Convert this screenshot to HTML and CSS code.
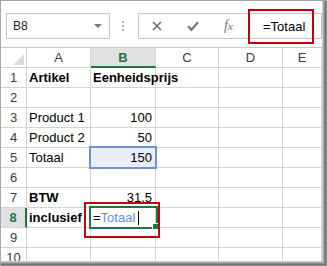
FILE: index.html
```html
<!DOCTYPE html>
<html>
<head>
<meta charset="utf-8">
<link rel="stylesheet" href="styles.css">
</head>
<body>
<div class="window">
  <div class="inner">
    <div class="toolbar">
      <div class="namebox"><span>B8</span><span class="caret"></span></div>
      <div class="dots"><i></i><i></i><i></i></div>
      <div class="fbar">
        <svg class="icon-x" width="10" height="10" viewBox="0 0 10 10"><path d="M1 1 L9 9 M9 1 L1 9" stroke="#6b6b6b" stroke-width="1.6" fill="none"/></svg>
        <svg class="icon-ok" width="12" height="12" viewBox="0 0 12 12"><path d="M1 6.2 L4.4 9.8 L11 2.2" stroke="#7a7a7a" stroke-width="2.3" fill="none"/></svg>
        <span class="fx">f<small>x</small></span>
        <span class="ftext">=Totaal</span>
      </div>
    </div>
    <div class="grid">
      <div class="hd corner"><span class="tri"></span></div>
      <div class="hd">A</div>
      <div class="hd sel-col">B</div>
      <div class="hd">C</div>
      <div class="hd">D</div>
      <div class="hd">E</div>

      <div class="rh">1</div><div class="c b">Artikel</div><div class="c b">Eenheidsprijs</div><div class="c"></div><div class="c"></div><div class="c"></div>
      <div class="rh">2</div><div class="c"></div><div class="c"></div><div class="c"></div><div class="c"></div><div class="c"></div>
      <div class="rh">3</div><div class="c">Product 1</div><div class="c num">100</div><div class="c"></div><div class="c"></div><div class="c"></div>
      <div class="rh">4</div><div class="c">Product 2</div><div class="c num">50</div><div class="c"></div><div class="c"></div><div class="c"></div>
      <div class="rh">5</div><div class="c">Totaal</div><div class="c num refcell">150</div><div class="c"></div><div class="c"></div><div class="c"></div>
      <div class="rh">6</div><div class="c"></div><div class="c"></div><div class="c"></div><div class="c"></div><div class="c"></div>
      <div class="rh">7</div><div class="c b">BTW</div><div class="c num">31,5</div><div class="c"></div><div class="c"></div><div class="c"></div>
      <div class="rh sel-row">8</div><div class="c b">inclusief</div><div class="c edit"><span class="eq">=</span><span class="ref">Totaal</span><span class="cursor"></span></div><div class="c"></div><div class="c"></div><div class="c"></div>
      <div class="rh">9</div><div class="c"></div><div class="c"></div><div class="c"></div><div class="c"></div><div class="c"></div>
      <div class="rh">10</div><div class="c"></div><div class="c"></div><div class="c"></div><div class="c"></div><div class="c"></div>
    </div>

    <div class="refbox"></div>
    <div class="active"><span class="handle"></span></div>
    <div class="callout callout-grid"></div>
    <div class="callout callout-bar"></div>
  </div>
</div>
</body>
</html>
```

FILE: styles.css
```css
html, body {
  margin: 0;
  padding: 0;
  background: #ffffff;
}

body {
  font-family: "Liberation Sans", Arial, sans-serif;
  color: #000;
}

.window {
  width: 327px;
  height: 266px;
  box-sizing: border-box;
  border-top: 1px solid #a3a3a3;
  border-left: 1px solid #a8a8a8;
  padding: 0 5px 5px 0;
  background: #ffffff;
  box-shadow:
    inset -1px -1px 0 #8f8f8f,
    inset -2px -2px 0 #707070,
    inset -3px -3px 0 #8a8a8a,
    inset -4px -4px 0 #a9a9a9,
    inset -5px -5px 0 #c9c9c9;
}

.inner {
  position: relative;
  height: 100%;
  overflow: hidden;
  background: #ffffff;
}

/* ---------- formula bar area ---------- */
.toolbar {
  height: 46px;
  box-sizing: border-box;
  padding-top: 12px;
  display: flex;
  align-items: flex-start;
}

.namebox {
  margin-left: 5px;
  width: 104px;
  height: 26px;
  box-sizing: border-box;
  border: 1px solid #c6c6c6;
  display: flex;
  align-items: center;
  padding-left: 6px;
  font-size: 12px;
  color: #222;
}

.caret {
  margin-left: auto;
  margin-right: 7px;
  width: 0;
  height: 0;
  border-left: 4px solid transparent;
  border-right: 4px solid transparent;
  border-top: 4px solid #7a7a7a;
}

.dots {
  margin-left: 12px;
  margin-top: 8px;
  display: flex;
  flex-direction: column;
  gap: 2px;
}

.dots i {
  display: block;
  width: 2px;
  height: 2px;
  background: #b3b3b3;
}

.fbar {
  margin-left: 14px;
  flex: 1;
  height: 26px;
  box-sizing: border-box;
  border: 1px solid #c6c6c6;
  display: flex;
  align-items: center;
}

.icon-x {
  margin-left: 13px;
  display: block;
}

.icon-ok {
  margin-left: 25px;
  display: block;
}

.fx {
  margin-left: 25px;
  width: 14px;
  font-family: "Liberation Serif", "Times New Roman", serif;
  font-style: italic;
  font-size: 14px;
  color: #777;
  line-height: 14px;
}

.fx small {
  font-size: 11px;
}

.ftext {
  margin-left: 25px;
  font-size: 13px;
  color: #000;
}

/* ---------- grid ---------- */
.grid {
  border-top: 1px solid #c6c6c6;
  display: grid;
  grid-template-columns: 26px 64px 65px 63px 64px 1fr;
  grid-auto-rows: 20px;
}

.grid > div {
  box-sizing: border-box;
  border-right: 1px solid #d4d4d4;
  border-bottom: 1px solid #d4d4d4;
  font-size: 13px;
  line-height: 19px;
  white-space: nowrap;
}

.hd {
  text-align: center;
  color: #3c3c3c;
}

.corner {
  display: flex;
  justify-content: flex-end;
  align-items: flex-end;
  padding: 0 2px 2px 0;
}

.tri {
  width: 0;
  height: 0;
  border-left: 11px solid transparent;
  border-bottom: 11px solid #dcdcdc;
}

.sel-col {
  background: #e1e1e1;
  color: #217346;
  font-weight: bold;
  border-bottom: 2px solid #217346 !important;
}

.rh {
  text-align: center;
  color: #3c3c3c;
}

.sel-row {
  background: #e1e1e1;
  color: #217346;
  font-weight: bold;
  border-right: 2px solid #217346 !important;
}

.c {
  padding: 0 2px;
  overflow: visible;
}

.b {
  font-weight: bold;
}

.num {
  text-align: right;
  padding-right: 3px;
}

.refcell {
  background: #e9eefa;
}

.edit {
  display: flex;
  align-items: center;
}

.eq {
  color: #000;
}

.ref {
  color: #5f93de;
}

.cursor {
  display: inline-block;
  width: 1px;
  height: 14px;
  background: #000;
  margin-left: 3px;
}

/* ---------- overlays ---------- */
.refbox {
  position: absolute;
  left: 88px;
  top: 145px;
  width: 68px;
  height: 23px;
  box-sizing: border-box;
  border: 2px solid #6f91dc;
}

.active {
  position: absolute;
  left: 88px;
  top: 205px;
  width: 69px;
  height: 23px;
  box-sizing: border-box;
  border: 2px solid #217346;
}

.handle {
  position: absolute;
  right: -3px;
  bottom: -3px;
  width: 5px;
  height: 5px;
  background: #217346;
  border: 1px solid #ffffff;
}

.callout {
  position: absolute;
  box-sizing: border-box;
  border: 2px solid #c0000b;
}

.callout-grid {
  left: 83px;
  top: 201px;
  width: 76px;
  height: 36px;
}

.callout-bar {
  left: 247px;
  top: 8px;
  width: 66px;
  height: 35px;
}
```
